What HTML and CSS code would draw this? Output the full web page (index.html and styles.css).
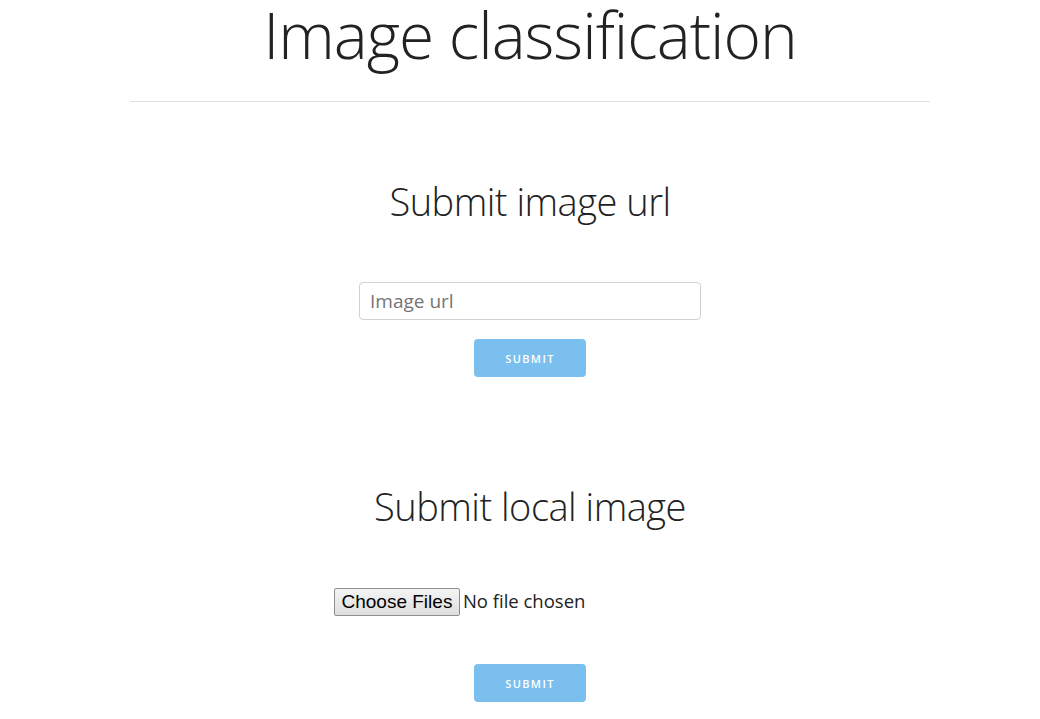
FILE: index.html
```html
<!DOCTYPE html>
<html>
<head>
<meta charset="utf-8">
<link rel="stylesheet" href="styles.css">
</head>
<body>
<div class="container">
  <h1 class="title">Image classification</h1>
  <hr class="rule">
  <section class="block block-url">
    <h2 class="heading">Submit image url</h2>
    <form class="form">
      <input class="url-input" type="text" placeholder="Image url">
      <button class="submit" type="button">Submit</button>
    </form>
  </section>
  <section class="block block-local">
    <h2 class="heading">Submit local image</h2>
    <form class="form">
      <input class="file-input" type="file" multiple>
      <button class="submit submit-local" type="button">Submit</button>
    </form>
  </section>
</div>
</body>
</html>
```
FILE: styles.css
```css
html, body {
  margin: 0;
  padding: 0;
  background: #fff;
}
body {
  font-family: "Open Sans", "Lato", sans-serif;
  color: #222;
  padding-left: 20px;
}
.container {
  width: 800px;
  margin: 0 auto;
  display: flex;
  flex-direction: column;
  align-items: center;
}
.title {
  margin: 0;
  font-size: 64px;
  font-weight: 300;
  line-height: 70px;
  letter-spacing: -1px;
  text-align: center;
  white-space: nowrap;
}
.rule {
  width: 100%;
  margin: 31px 0 0;
  border: 0;
  border-top: 1px solid #e1e1e1;
}
.block {
  display: flex;
  flex-direction: column;
  align-items: center;
  width: 100%;
}
.block-url { margin-top: 75px; }
.block-local { margin-top: 105px; }
.heading {
  margin: 0;
  font-size: 38px;
  font-weight: 300;
  line-height: 48px;
  letter-spacing: -0.5px;
}
.form {
  display: flex;
  flex-direction: column;
  align-items: center;
  margin-top: 57px;
}
.url-input {
  box-sizing: border-box;
  width: 342px;
  height: 38px;
  padding: 6px 10px;
  border: 1px solid #d1d1d1;
  border-radius: 4px;
  font-family: "Open Sans", sans-serif;
  font-size: 19px;
  color: #222;
  outline: none;
}
.url-input::placeholder { color: #757575; }
.submit {
  box-sizing: border-box;
  margin-top: 19px;
  width: 112px;
  height: 38px;
  border: 0;
  border-radius: 4px;
  background: #7abfee;
  color: #fff;
  font-family: "Open Sans", sans-serif;
  font-size: 11px;
  font-weight: 600;
  letter-spacing: 1.4px;
  text-transform: uppercase;
  cursor: pointer;
}
.file-input {
  width: 392px;
  font-family: "Open Sans", sans-serif;
  font-size: 18.5px;
  color: #222;
}
.file-input::file-selector-button {
  font-family: "Liberation Sans", Arial, sans-serif;
  font-size: 19px;
  color: #000;
  height: 28px;
  padding: 0 6.5px;
  margin-right: 3px;
  border: 1px solid #8f8f8f;
  border-radius: 2px;
  background: linear-gradient(#f4f4f4, #dedede);
}
.block-local .form { margin-top: 58px; }
.submit-local { margin-top: 48px; }
```
